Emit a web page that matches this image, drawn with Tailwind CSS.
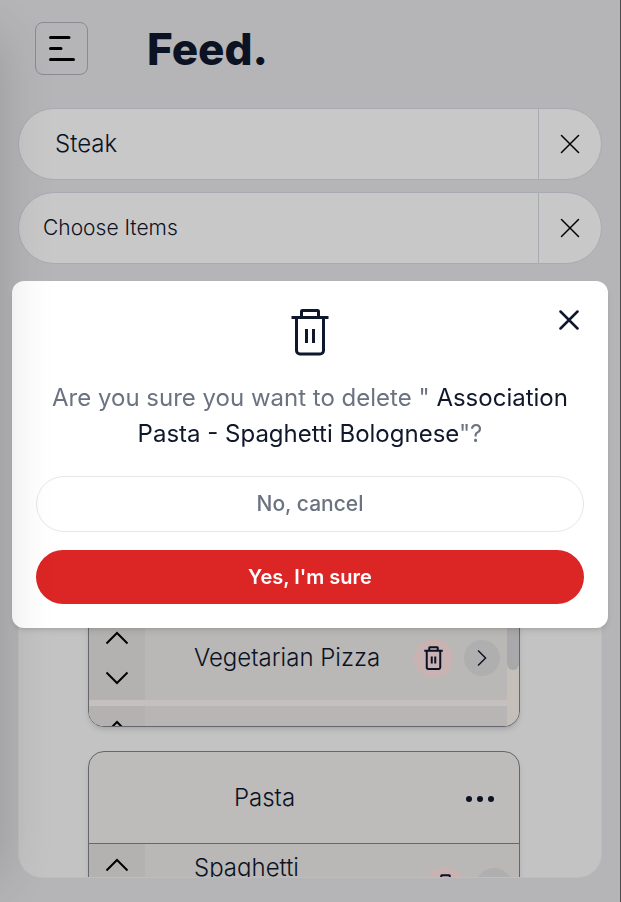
<!DOCTYPE html>
<html lang="en">
<head>
<meta charset="utf-8">
<meta name="viewport" content="width=device-width, initial-scale=1">
<title>Feed</title>
<script src="https://cdn.jsdelivr.net/npm/@tailwindcss/browser@4"></script>
</head>
<body class="h-screen overflow-hidden border-r border-[#4b4b4d] bg-[#b5b5b8] font-['Inter',sans-serif] text-[#0b1224]">
<svg class="hidden">
  <symbol id="trash" viewBox="0 0 38 48" fill="none" stroke="currentColor"><path d="M0.5 9.500h37M10.500 9.500v-6a1 1 0 0 1 1-1h15a1 1 0 0 1 1 1v6M5.500 9.500V42.500a3.500 3.500 0 0 0 3.500 3.500h20a3.500 3.500 0 0 0 3.500-3.500V9.500M15.500 21v14M22.500 21v14"/></symbol>
  <symbol id="up" viewBox="0 0 24 14" fill="none" stroke="currentColor" stroke-width="2"><path d="M1.500 12.500L12 2l10.500 10.500"/></symbol>
  <symbol id="cross" viewBox="0 0 20 20" fill="none" stroke="currentColor"><path d="M1.500 1.500l17 17M18.500 1.500l-17 17" stroke-linecap="round"/></symbol>
</svg>
<div class="flex h-full flex-col px-[18px] pb-6">
  <header class="flex items-center gap-[59px] pt-[22px] pl-[17px]">
    <button aria-label="Menu" class="flex size-[53px] items-center justify-center rounded-lg border border-[#8a8b90] text-black">
      <svg class="h-7 w-7" viewBox="0 0 28 28" fill="none" stroke="currentColor" stroke-width="3" stroke-linecap="round"><path d="M2.500 2.500h18.500M2.500 13.500h10.500M2.500 24.500h23"/></svg>
    </button>
    <h1 class="text-[44px] leading-[52px] font-extrabold">Feed.</h1>
  </header>
  <div class="mt-[33px] flex h-[72px] shrink-0 overflow-hidden rounded-full border border-[#a9abb3] bg-[#c8c8c8]">
    <input aria-label="Menu name" value="Steak" class="min-w-0 flex-1 pl-9 text-2xl font-light outline-none">
    <button aria-label="Clear name" class="flex w-[63px] items-center justify-center border-l border-[#a9abb3] text-black"><svg class="size-5" stroke-width="1.500"><use href="#cross"/></svg></button>
  </div>
  <div class="mt-3 flex h-[72px] shrink-0 overflow-hidden rounded-full border border-[#a9abb3] bg-[#c8c8c8]">
    <input aria-label="Items" placeholder="Choose Items" class="min-w-0 flex-1 pl-6 text-[21px] font-light outline-none placeholder:text-[#0b1224]">
    <button aria-label="Clear items" class="flex w-[63px] items-center justify-center border-l border-[#a9abb3] text-black"><svg class="size-5" stroke-width="1.500"><use href="#cross"/></svg></button>
  </div>
  <main class="mt-6 flex min-h-0 flex-1 flex-col gap-6 overflow-hidden rounded-3xl border border-[#bdbdbe] bg-[#c3c3c3] pt-[234px] pr-[81px] pl-[69px]">
    <section class="shrink-0 overflow-hidden rounded-2xl border border-[#65676d] bg-[#bdbcba] shadow-md">
      <div class="h-[92px] border-b border-[#65676d]"></div>
      <div class="flex h-[110px] overflow-hidden bg-[#c4c0b9]">
        <ul class="flex min-w-0 flex-1 flex-col gap-[6px] bg-[#c5c0bd]">
          <li class="flex h-[84px] shrink-0 items-center bg-[#b9b8b6]">
            <div class="flex h-full w-14 flex-col items-center justify-center gap-[26px] bg-[#b3b2b1] text-black">
              <button aria-label="Move up"><svg class="block h-3.5 w-6"><use href="#up"/></svg></button>
              <button aria-label="Move down"><svg class="block h-3.5 w-6 rotate-180"><use href="#up"/></svg></button>
            </div>
            <span class="flex-1 pl-[49px] text-2xl leading-9 font-light">Vegetarian Pizza</span>
            <button aria-label="Delete" class="flex size-[39px] items-center justify-center rounded-full bg-[#c9b3b2]"><svg class="h-6 w-[19px]" stroke-width="4"><use href="#trash"/></svg></button>
            <button aria-label="Open" class="mr-[7px] ml-[11px] flex size-9 items-center justify-center rounded-full bg-[#afafaf]"><svg class="h-2.5 w-[18px] rotate-90"><use href="#up"/></svg></button>
          </li>
          <li class="flex h-[84px] shrink-0 bg-[#b7b6b4]">
            <div class="flex h-full w-14 justify-center bg-[#b3b2b1] pt-3.5 text-black">
              <button aria-label="Move up" class="self-start"><svg class="block h-3.5 w-6"><use href="#up"/></svg></button>
            </div>
          </li>
        </ul>
        <div class="w-3"><div class="h-[54px] rounded-b-full bg-[#a9a9ab]"></div></div>
      </div>
    </section>
    <section class="shrink-0 rounded-t-2xl border border-[#65676d] bg-[#bdbcba] shadow-md">
      <div class="flex h-[92px] items-center border-b border-[#65676d]">
        <h2 class="flex-1 text-center text-2xl font-light">Pasta</h2>
        <button aria-label="More options" class="flex w-[79px] justify-center"><svg class="h-7 w-8" viewBox="0 0 32 28" fill="currentColor"><circle cx="5" cy="15" r="3"/><circle cx="16" cy="15" r="3"/><circle cx="27" cy="15" r="3"/></svg></button>
      </div>
      <div class="flex h-[84px] items-center bg-[#b9b8b6]">
        <div class="flex h-full w-14 justify-center bg-[#b3b2b1] pt-3.5 text-black">
          <button aria-label="Move up" class="self-start"><svg class="block h-3.5 w-6"><use href="#up"/></svg></button>
        </div>
        <span class="flex-1 pr-8 pl-[49px] text-2xl leading-9 font-light">Spaghetti Bolognese</span>
        <button aria-label="Delete" class="flex size-[39px] items-center justify-center rounded-full bg-[#c9b3b2]"><svg class="h-6 w-[19px]" stroke-width="4"><use href="#trash"/></svg></button>
        <button aria-label="Open" class="mr-[7px] ml-[11px] flex size-9 items-center justify-center rounded-full bg-[#afafaf]"><svg class="h-2.5 w-[18px] rotate-90"><use href="#up"/></svg></button>
      </div>
    </section>
  </main>
</div>
<div class="fixed inset-0 flex items-center pt-[7px] pr-[13px] pl-3">
  <div role="dialog" aria-label="Confirm delete" class="relative flex w-full flex-col items-center rounded-xl bg-white px-6 pt-[27px] pb-6 text-[#0f172a] shadow-md">
    <button aria-label="Close" class="absolute top-[29px] right-[29px]"><svg class="block size-5" stroke-width="2.500"><use href="#cross"/></svg></button>
    <svg class="h-12 w-[38px]" stroke-width="3"><use href="#trash"/></svg>
    <p class="mt-6 text-center text-2xl leading-9 text-[#6b7280]">Are you sure you want to delete " <span class="text-[#0f172a]">Association Pasta - Spaghetti Bolognese</span>"?</p>
    <button class="mt-6 h-14 w-full rounded-full border border-[#e5e7eb] text-[21px] font-medium text-[#6b7280]">No, cancel</button>
    <button class="mt-[18px] h-[54px] w-full rounded-full bg-[#dc2626] text-xl font-semibold text-white">Yes, I'm sure</button>
  </div>
</div>
<div class="pointer-events-none fixed top-9 bottom-6 -left-80 w-80 shadow-[0_0_50px_rgba(0,0,0,0.16)]"></div>
</body>
</html>
